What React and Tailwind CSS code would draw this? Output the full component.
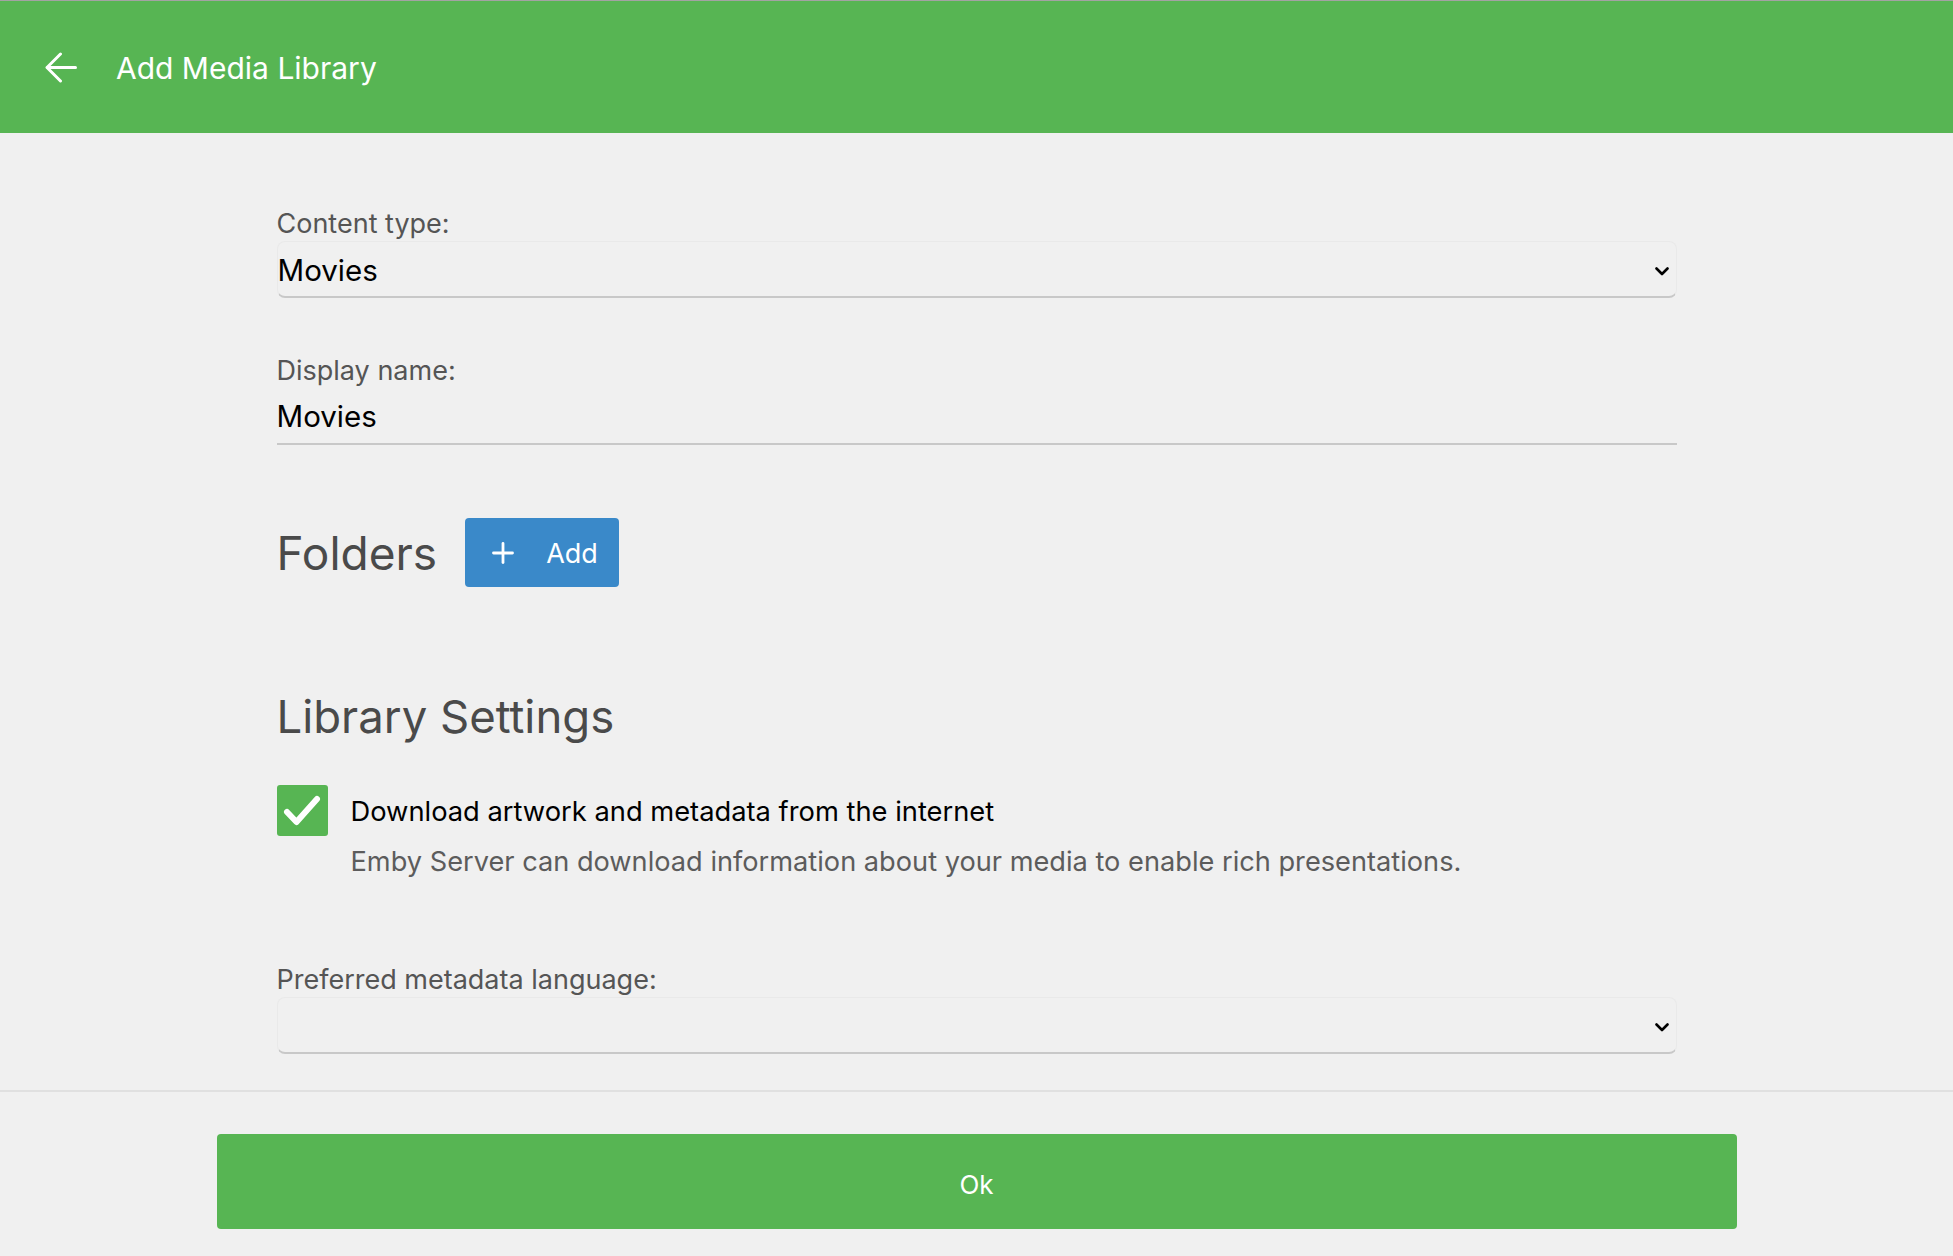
import React, { useState } from "react";

const GREEN = "bg-[#57b553]";

const BackArrow = () => (
  <svg width="32" height="31" viewBox="0 0 32 31" fill="none" stroke="white" strokeWidth="3" strokeLinecap="round" strokeLinejoin="round">
    <path d="M30.5 15.5H2.5" />
    <path d="M15.5 2 L2 15.5 L15.5 29" />
  </svg>
);

const Chevron = () => (
  <svg width="14" height="9" viewBox="0 0 14 9" fill="none" stroke="black" strokeWidth="2.6" strokeLinecap="round" strokeLinejoin="round">
    <path d="M1.5 1.5 L7 7 L12.5 1.5" />
  </svg>
);

const Plus = () => (
  <svg width="22" height="22" viewBox="0 0 22 22" fill="none" stroke="white" strokeWidth="2.8" strokeLinecap="round">
    <path d="M11 1.5V20.5" />
    <path d="M1.5 11H20.5" />
  </svg>
);

const Check = () => (
  <svg width="38" height="32" viewBox="0 0 38 32" fill="none" stroke="white" strokeWidth="6" strokeLinecap="round" strokeLinejoin="round">
    <path d="M4 17 L13.5 27 L34 4" />
  </svg>
);

const FieldLabel = ({ children, className = "" }) => (
  <div className={`text-[27px] leading-[32px] text-[#555555] ${className}`}>{children}</div>
);

const SelectBox = ({ value }) => (
  <div className="mt-[1px] box-border flex h-[57px] items-start justify-between rounded-lg border border-[#e9e9e9] border-b-2 border-b-[#c8c8c8] pt-[10px] pr-[7px]">
    <span className="text-[29.5px] leading-[36px] text-black">{value}</span>
    <span className="mt-[15px]">
      <Chevron />
    </span>
  </div>
);

export default function App() {
  const [fetchMeta, setFetchMeta] = useState(true);

  return (
    <div className="flex h-screen flex-col bg-[#f0f0f0] font-['Inter','Liberation_Sans',sans-serif]">
      <header className={`flex h-[133px] shrink-0 items-center border-t border-[#a3a3a3] ${GREEN}`}>
        <button type="button" className="ml-[45px] flex items-center">
          <BackArrow />
        </button>
        <h1 className="ml-[39px] mt-[2px] text-[30px] font-normal text-white">Add Media Library</h1>
      </header>

      <main className="flex-1 overflow-hidden">
        <div className="mx-auto w-[1400px] pt-[75px]">
          <FieldLabel>Content type:</FieldLabel>
          <SelectBox value="Movies" />

          <FieldLabel className="mt-[57px]">Display name:</FieldLabel>
          <div className="border-b-2 border-[#c8c8c8] pt-[11px] pb-[9px] text-[29.5px] leading-[36px] text-black">
            Movies
          </div>

          <div className="mt-[73px] flex items-center gap-[28px]">
            <h2 className="text-[46px] font-normal leading-[56px] text-[#4a4a4a]">Folders</h2>
            <button
              type="button"
              className="flex h-[69px] items-center gap-[32px] rounded-[4px] bg-[#3a89c9] pl-[27px] pr-[21px] pt-[3px] text-[27px] text-white"
            >
              <span className="-mt-[3px]">
                <Plus />
              </span>
              <span>Add</span>
            </button>
          </div>

          <h2 className="mt-[102px] text-[45.5px] font-normal leading-[56px] text-[#4a4a4a]">Library Settings</h2>

          <div className="mt-[40px] flex items-start gap-[23px]">
            <button
              type="button"
              onClick={() => setFetchMeta((v) => !v)}
              className={`flex h-[51px] w-[51px] shrink-0 items-center justify-center rounded-[3px] ${fetchMeta ? GREEN : "bg-white border-2 border-[#999]"}`}
            >
              {fetchMeta ? <Check /> : null}
            </button>
            <div className="pt-[11px]">
              <div className="text-[27.3px] leading-[32px] text-black">Download artwork and metadata from the internet</div>
              <div className="mt-[17px] text-[27.2px] leading-[34px] text-[#5c5c5c]">
                Emby Server can download information about your media to enable rich presentations.
              </div>
            </div>
          </div>

          <FieldLabel className="mt-[85px]">Preferred metadata language:</FieldLabel>
          <SelectBox value="" />
        </div>
      </main>

      <footer className="shrink-0 border-t-2 border-[#e0e0e0] pt-[42px] pb-[27px]">
        <button
          type="button"
          className={`mx-auto flex h-[95px] w-[1520px] items-center justify-center rounded-[4px] pt-[6px] text-[26px] text-white ${GREEN}`}
        >
          Ok
        </button>
      </footer>
    </div>
  );
}
